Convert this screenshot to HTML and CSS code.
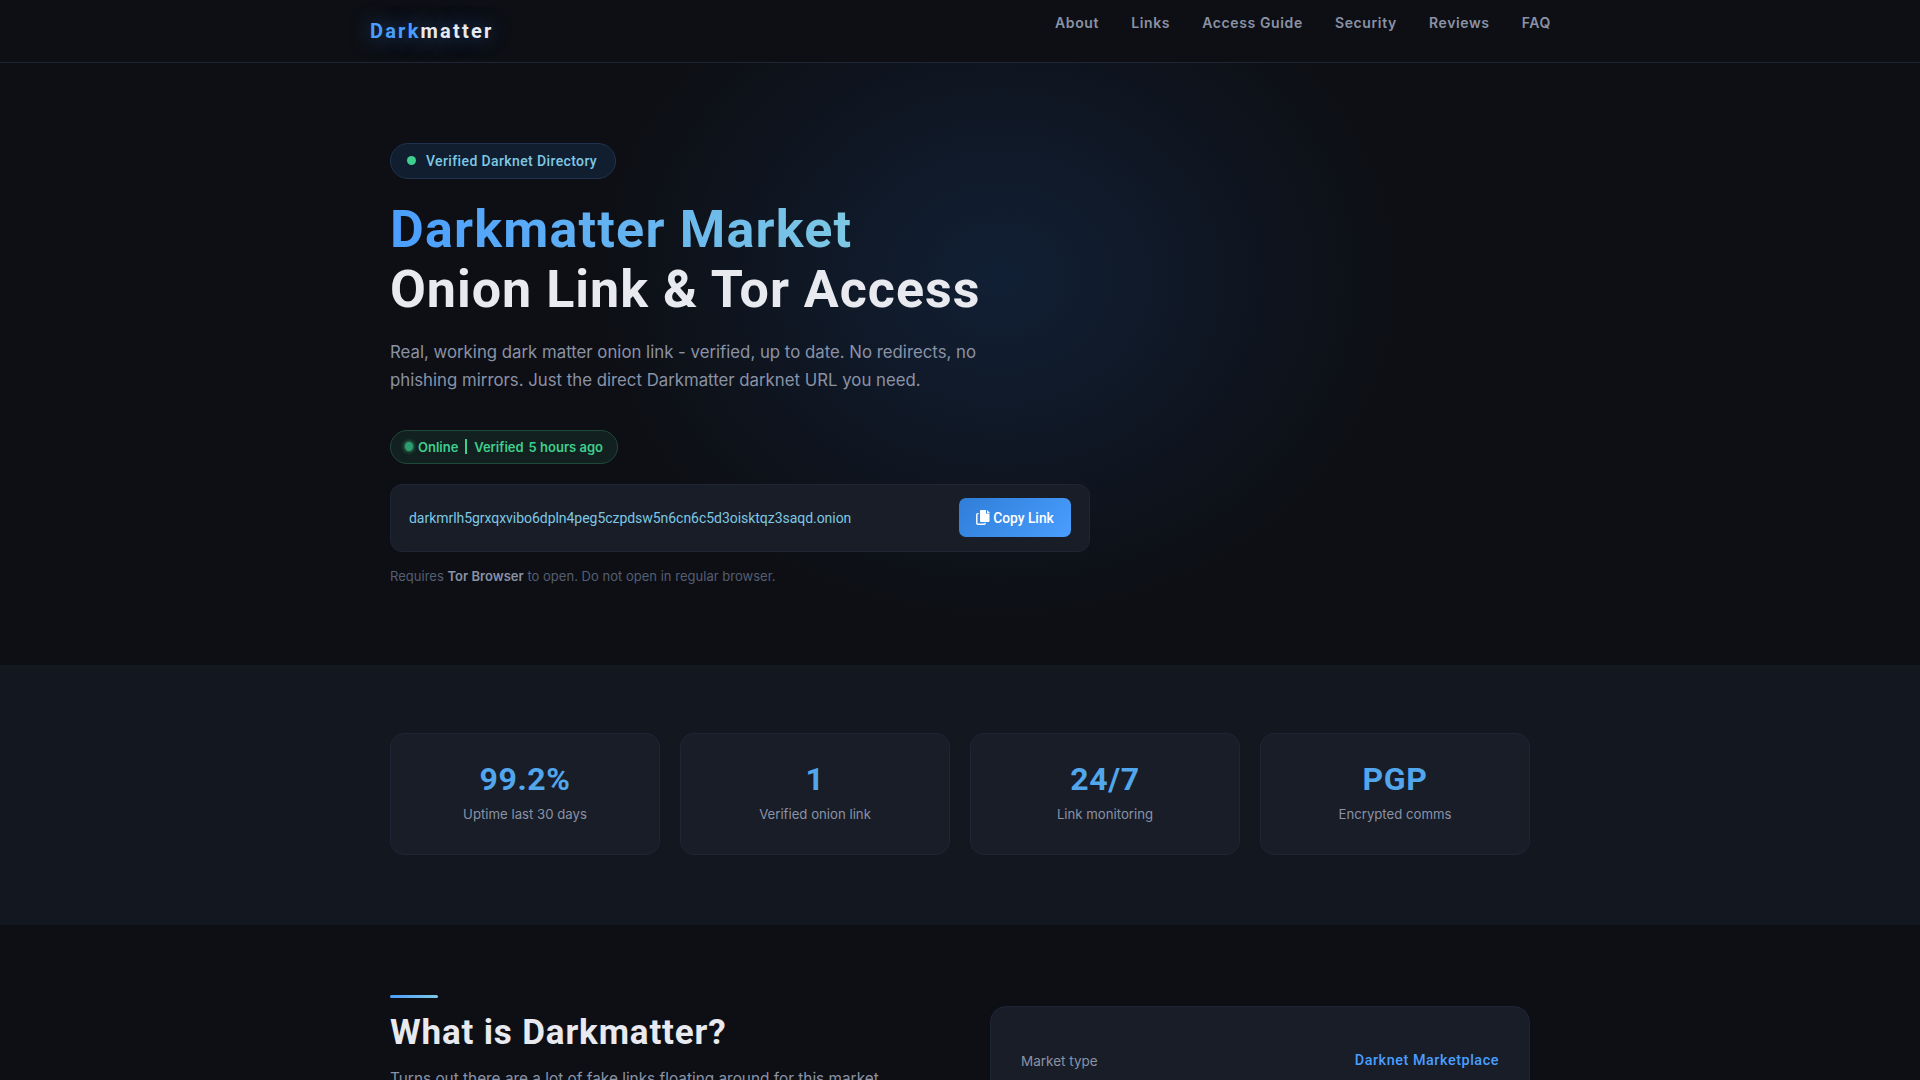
FILE: index.html
```html
<!DOCTYPE html>
<html lang="en">
<head>
<meta charset="utf-8">
<title>Darkmatter Market Onion Link</title>
<link rel="stylesheet" href="styles.css">
</head>
<body>

  <!-- top bar -->
  <nav class="navbar">
    <div class="nav-inner">
      <a class="logo" href="#"><span class="logo-blue">Dark</span>matter</a>
      <div class="nav-links">
        <a href="#">About</a>
        <a href="#">Links</a>
        <a href="#">Access Guide</a>
        <a href="#">Security</a>
        <a href="#">Reviews</a>
        <a href="#">FAQ</a>
      </div>
    </div>
  </nav>

  <!-- hero -->
  <section class="hero">
    <div class="container">
      <div class="badge"><span class="badge-dot"></span>Verified Darknet Directory</div>
      <h1><span class="grad-text">Darkmatter Market</span><br>Onion Link &amp; Tor Access</h1>
      <p class="hero-sub">Real, working dark matter onion link - verified, up to date. No redirects, no phishing mirrors. Just the direct Darkmatter darknet URL you need.</p>
      <div class="status-pill">
        <span class="status-dot"></span>
        <span>Online</span>
        <span class="status-sep"></span>
        <span>Verified</span>
        <span>5 hours ago</span>
      </div>
      <div class="link-box">
        <span class="onion">darkmrlh5grxqxvibo6dpln4peg5czpdsw5n6cn6c5d3oisktqz3saqd.onion</span>
        <button class="copy-btn">
          <svg class="copy-icon" viewBox="0 0 14 15" width="14" height="15">
            <path d="M5 0h5v3.5h3.5V11a1 1 0 0 1-1 1H5a1 1 0 0 1-1-1V1a1 1 0 0 1 1-1z" fill="#fff"/>
            <path d="M11 0l3 3h-3z" fill="#fff"/>
            <path d="M2.6 3.6H1.8a1 1 0 0 0-1 1v8.6a1 1 0 0 0 1 1h6.4a1 1 0 0 0 1-1v-.4" fill="none" stroke="#fff" stroke-width="1.4"/>
          </svg>
          Copy Link
        </button>
      </div>
      <p class="link-note">Requires <strong>Tor Browser</strong> to open. Do not open in regular browser.</p>
    </div>
  </section>

  <!-- stats -->
  <section class="stats">
    <div class="container stats-grid">
      <div class="stat-card">
        <div class="stat-value">99.2%</div>
        <div class="stat-label">Uptime last 30 days</div>
      </div>
      <div class="stat-card">
        <div class="stat-value">1</div>
        <div class="stat-label">Verified onion link</div>
      </div>
      <div class="stat-card">
        <div class="stat-value">24/7</div>
        <div class="stat-label">Link monitoring</div>
      </div>
      <div class="stat-card">
        <div class="stat-value">PGP</div>
        <div class="stat-label">Encrypted comms</div>
      </div>
    </div>
  </section>

  <!-- about -->
  <section class="about">
    <div class="container about-grid">
      <div>
        <div class="accent-line"></div>
        <h2>What is Darkmatter?</h2>
        <p class="about-text">Turns out there are a lot of fake links floating around for this market</p>
      </div>
      <div class="info-panel">
        <div class="info-row">
          <span class="info-key">Market type</span>
          <span class="info-val">Darknet Marketplace</span>
        </div>
      </div>
    </div>
  </section>

</body>
</html>
```

FILE: styles.css
```css
/* Base */
* {
  box-sizing: border-box;
}

html, body {
  height: 100%;
}

body {
  margin: 0;
  overflow: hidden;
  background: #0d0f14;
  color: #e8eaf0;
  font-family: "Inter", sans-serif;
}

a {
  text-decoration: none;
}

.container {
  width: 1140px;
  margin: 0 auto;
}

/* Navbar */
.navbar {
  height: 63px;
  border-bottom: 1px solid #1e2535;
  background: #0d0f14;
}

.nav-inner {
  width: 1200px;
  margin: 0 auto;
  display: flex;
  justify-content: space-between;
  align-items: flex-start;
  padding: 0 9px 0 10px;
}

.logo {
  margin-top: 19px;
  font-family: "Roboto", sans-serif;
  font-size: 20px;
  line-height: 24px;
  font-weight: 700;
  letter-spacing: 2.2px;
  color: #e8eaf0;
  text-shadow: 0 0 20px rgba(74, 158, 255, 0.5);
}

.logo-blue {
  color: #4a9eff;
}

.nav-links {
  display: flex;
  gap: 32px;
  margin-top: 14px;
}

.nav-links a {
  font-size: 14px;
  line-height: 17px;
  font-weight: 600;
  letter-spacing: 0.63px;
  color: #8a92a6;
}

/* Hero */
.hero {
  height: 602px;
  padding-top: 80px;
  background: radial-gradient(ellipse 400px 340px at 1000px 215px, rgba(30, 80, 150, 0.25), rgba(30, 80, 150, 0) 100%);
}

.badge {
  display: inline-flex;
  align-items: center;
  gap: 10px;
  height: 36px;
  padding: 0 18px 0 16px;
  border: 1px solid #1f3350;
  border-radius: 18px;
  background: #111e30;
  color: #7ec8e3;
  font-family: "Roboto", sans-serif;
  font-size: 14px;
  font-weight: 500;
  letter-spacing: 0.38px;
}

.badge-dot {
  width: 9px;
  height: 9px;
  margin-top: -2px;
  border-radius: 50%;
  background: #3ecf8e;
}

h1 {
  margin: 21px 0 0;
  font-family: "Roboto", sans-serif;
  font-size: 52px;
  line-height: 59.8px;
  font-weight: 700;
  letter-spacing: 1px;
  color: #e8eaf0;
}

.grad-text {
  letter-spacing: 1.2px;
  background: linear-gradient(90deg, #4a9eff, #7ec8e3);
  -webkit-background-clip: text;
  background-clip: text;
  color: transparent;
}

.hero-sub {
  width: 600px;
  margin: 18px 0 0;
  font-size: 16.8px;
  line-height: 28.16px;
  color: #8a92a6;
}

.status-pill {
  display: flex;
  width: 228px;
  height: 34px;
  align-items: center;
  gap: 5px;
  margin-top: 36px;
  padding: 0 14px;
  border: 1px solid #1d4a38;
  border-radius: 17px;
  background: #12201f;
  color: #3ecf8e;
  font-size: 13px;
  font-weight: 600;
  white-space: nowrap;
}

.status-dot {
  width: 9px;
  height: 9px;
  border-radius: 50%;
  background: #2f9e6e;
  box-shadow: 0 0 4px #3ecf8e;
}

.status-sep {
  width: 2px;
  height: 15px;
  margin: 0 2px;
  background: #3ecf8e;
}

.link-box {
  display: flex;
  justify-content: space-between;
  align-items: center;
  width: 700px;
  height: 68px;
  margin-top: 20px;
  padding: 0 18px;
  border: 1px solid #1e2535;
  border-radius: 12px;
  background: #181d28;
}

.onion {
  font-family: "Roboto", sans-serif;
  font-size: 14px;
  font-weight: 400;
  letter-spacing: -0.04px;
  color: #7ec8e3;
}

.copy-btn {
  display: flex;
  align-items: center;
  justify-content: center;
  gap: 3px;
  width: 112px;
  height: 39px;
  border: 0;
  border-radius: 7px;
  background: linear-gradient(135deg, #2f7dd8, #4a9eff);
  color: #fff;
  font-family: "Roboto", sans-serif;
  font-size: 13.8px;
  font-weight: 500;
}

.link-note {
  margin: 14px 0 0;
  font-size: 13px;
  line-height: 20px;
  letter-spacing: 0.02px;
  color: #555e72;
}

.link-note strong {
  color: #8a92a6;
  font-weight: 600;
}

/* Stats */
.stats {
  height: 260px;
  padding-top: 68px;
  background: #131720;
}

.stats-grid {
  display: grid;
  grid-template-columns: repeat(4, 1fr);
  gap: 20px;
}

.stat-card {
  height: 122px;
  padding-top: 26px;
  border: 1px solid #1e2535;
  border-radius: 14px;
  background: #181d28;
  text-align: center;
}

.stat-value {
  font-family: "Roboto", sans-serif;
  font-size: 32px;
  line-height: 38px;
  font-weight: 700;
  letter-spacing: 0.6px;
  color: #52a6ec;
}

.stat-label {
  margin-top: 6px;
  font-size: 13.2px;
  line-height: 20px;
  color: #8a92a6;
}

/* About */
.about {
  padding-top: 70px;
}

.about-grid {
  display: grid;
  grid-template-columns: 1fr 1fr;
  gap: 60px;
}

.accent-line {
  width: 48px;
  height: 3px;
  border-radius: 2px;
  background: linear-gradient(90deg, #4a9eff, #7ec8e3);
}

h2 {
  margin: 14px 0 0;
  font-family: "Roboto", sans-serif;
  font-size: 35px;
  line-height: 42px;
  font-weight: 700;
  letter-spacing: 0.85px;
  color: #e8eaf0;
}

.about-text {
  margin: 12px 0 0;
  font-size: 15.36px;
  line-height: 26px;
  color: #8a92a6;
}

.info-panel {
  margin-top: 11px;
  height: 300px;
  padding: 44px 30px;
  border: 1px solid #1e2535;
  border-radius: 16px;
  background: #181d28;
}

.info-row {
  display: flex;
  justify-content: space-between;
  font-size: 13.5px;
  line-height: 20px;
}

.info-key {
  color: #8a92a6;
}

.info-val {
  font-family: "Roboto", sans-serif;
  font-size: 14.4px;
  font-weight: 500;
  letter-spacing: 0.55px;
  color: #4a9eff;
}
```
